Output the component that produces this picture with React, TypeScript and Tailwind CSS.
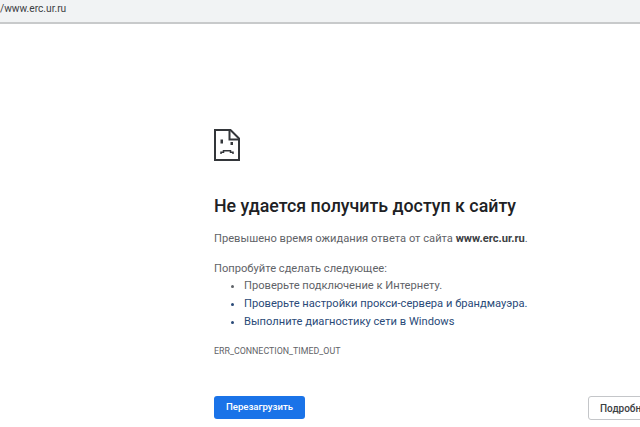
function SadTab() {
  return (
    <svg width="26" height="32" viewBox="0 0 26 32" fill="none" className="block">
      {/* page outline with folded corner */}
      <path d="M1 1H16.5L25 9.5V31H1Z" stroke="#33363a" strokeWidth="2" strokeLinejoin="miter" />
      <path d="M15.5 1V10.5H25" stroke="#33363a" strokeWidth="2" />
      {/* eyes */}
      <rect x="6.5" y="10.5" width="2.5" height="4" fill="#33363a" />
      <rect x="16.5" y="13" width="2.5" height="3" fill="#33363a" />
      {/* frown */}
      <path d="M7 25V23.3H9.5V21.8H16.5V23.3H19V25" stroke="#33363a" strokeWidth="1.5" />
    </svg>
  );
}

export default function App() {
  return (
    <div className="h-[427px] w-[640px] overflow-hidden bg-white font-['Roboto',sans-serif] text-[#5f6368]">
      {/* Address bar */}
      <div className="flex h-[24px] items-center border-b-2 border-[#c8cacb] bg-[#f1f3f4] pb-[4px] text-[10.2px] text-[#3c4043]">
        /www.erc.ur.ru
      </div>

      {/* Error page */}
      <div className="pl-[214px] pt-[105px]">
        <SadTab />
        <h1 className="mt-[33px] text-[17.8px] leading-[24px] font-medium whitespace-nowrap text-[#202124]">
          Не удается получить доступ к сайту
        </h1>
        <p className="mt-[12px] text-[11.15px] leading-[18px] whitespace-nowrap">
          Превышено время ожидания ответа от сайта <b className="text-[#3c4043]">www.erc.ur.ru</b>.
        </p>
        <p className="mt-[12px] text-[11.15px] leading-[18px] whitespace-nowrap">Попробуйте сделать следующее:</p>
        <ul className="-mt-[1px] list-disc pl-[30px] text-[11.15px] leading-[18px] whitespace-nowrap">
          <li>Проверьте подключение к Интернету.</li>
          <li className="text-[#2a4a78]">Проверьте настройки прокси-сервера и брандмауэра.</li>
          <li className="text-[#2a4a78]">Выполните диагностику сети в Windows</li>
        </ul>
        <p className="mt-[13px] text-[8.85px] leading-[14px]">ERR_CONNECTION_TIMED_OUT</p>

        <div className="mt-[38px] flex w-[440px] items-start justify-between">
          <button className="h-[23px] w-[91px] rounded-[3px] bg-[#1a73e8] text-[9.6px] font-medium text-white">
            Перезагрузить
          </button>
          <button className="-mr-[4px] h-[24px] w-[70px] shrink-0 rounded-[3px] border border-[#c4c6c9] bg-white pl-[11px] text-left text-[10px] font-medium whitespace-nowrap text-[#3c4043]">
            Подробнее
          </button>
        </div>
      </div>
    </div>
  );
}
